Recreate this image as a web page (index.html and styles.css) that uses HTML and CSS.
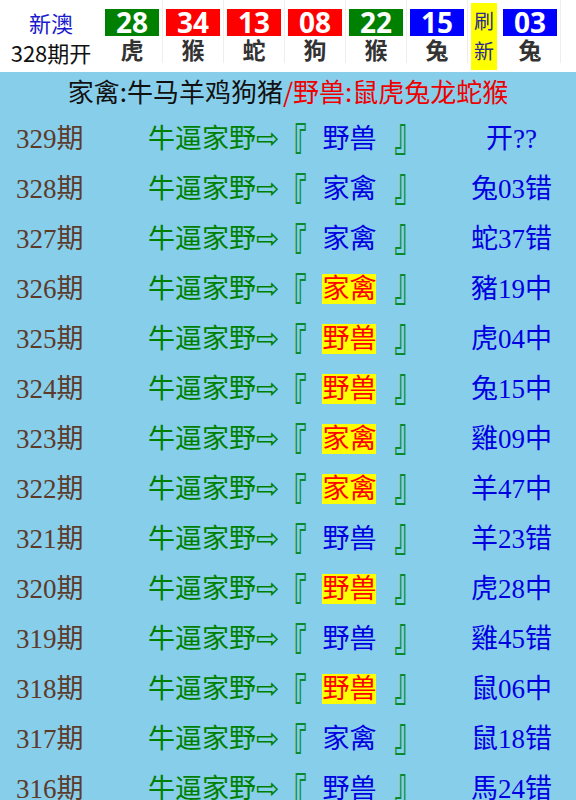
FILE: index.html
```html
<!DOCTYPE html>
<html lang="zh-CN">
<head>
    <meta charset="UTF-8">
    <meta name="viewport" content="width=device-width, initial-scale=1.0">
    <title>新澳 家禽野兽</title>
    <link rel="stylesheet" href="styles.css">
</head>
<body>

    <div class="kj">
        <div class="kj-info">
            <span class="kj-name">新澳</span>
            <span class="kj-qi">328期开</span>
        </div>
        <div class="kj-ball"><span class="num green">28</span><span class="sx">虎</span></div>
        <div class="kj-ball"><span class="num red">34</span><span class="sx">猴</span></div>
        <div class="kj-ball"><span class="num red">13</span><span class="sx">蛇</span></div>
        <div class="kj-ball"><span class="num red">08</span><span class="sx">狗</span></div>
        <div class="kj-ball"><span class="num green">22</span><span class="sx">猴</span></div>
        <div class="kj-ball"><span class="num blue">15</span><span class="sx">兔</span></div>
        <div class="kj-refresh"><span>刷新</span></div>
        <div class="kj-ball"><span class="num blue">03</span><span class="sx">兔</span></div>
    </div>

    <div class="box">
        <div class="title">家禽:牛马羊鸡狗猪<span class="title-red">/野兽:鼠虎兔龙蛇猴</span></div>
        <div id="list"></div>
    </div>

    <script>
        var rows = [
            ['329', '野兽', false, '开??'],
            ['328', '家禽', false, '兔03错'],
            ['327', '家禽', false, '蛇37错'],
            ['326', '家禽', true, '豬19中'],
            ['325', '野兽', true, '虎04中'],
            ['324', '野兽', true, '兔15中'],
            ['323', '家禽', true, '雞09中'],
            ['322', '家禽', true, '羊47中'],
            ['321', '野兽', false, '羊23错'],
            ['320', '野兽', true, '虎28中'],
            ['319', '野兽', false, '雞45错'],
            ['318', '野兽', true, '鼠06中'],
            ['317', '家禽', false, '鼠18错'],
            ['316', '野兽', false, '馬24错']
        ];

        var list = document.getElementById('list');
        rows.forEach(function (r) {
            var row = document.createElement('div');
            row.className = 'row';
            row.innerHTML =
                '<span class="qi">' + r[0] + '期</span>' +
                '<span class="tip">牛逼家野<span class="arrow">⇨</span><span class="br br-l">『</span>' +
                '<span class="pick' + (r[2] ? ' hit' : '') + '">' + r[1] + '</span><span class="br br-r">』</span></span>' +
                '<span class="res">' + r[3] + '</span>';
            list.appendChild(row);
        });
    </script>
</body>
</html>
```

FILE: styles.css
```css
body {
    margin: 0;
    padding: 0;
    background: #fff;
    font-family: "Noto Sans CJK SC", sans-serif;
}

/* 开奖栏 */
.kj {
    display: flex;
    height: 72px;
    background: #fff;
}

.kj-info {
    width: 102px;
    display: flex;
    flex-direction: column;
    align-items: center;
    padding-top: 7px;
    box-sizing: border-box;
}

.kj-name {
    color: #1a1acc;
    font-size: 22px;
    line-height: 30px;
}

.kj-qi {
    color: #111;
    font-size: 22px;
    line-height: 30px;
}

.kj-ball {
    width: 61px;
    padding: 9px 3px 0;
    box-sizing: border-box;
    display: flex;
    flex-direction: column;
    border-right: 1px solid #eee;
    height: 63px;
}

.num {
    display: block;
    height: 27px;
    line-height: 27px;
    text-align: center;
    color: #fff;
    font-family: "Open Sans", "Noto Sans", sans-serif;
    font-weight: bold;
    font-size: 28px;
}

.green { background: #008000; }
.red { background: #ff0000; }
.blue { background: #0000ff; }

.sx {
    display: block;
    text-align: center;
    color: #333;
    font-weight: bold;
    font-size: 23px;
    line-height: 27px;
}

.kj-refresh {
    width: 32px;
    display: flex;
    justify-content: center;
    padding-top: 3px;
}

.kj-refresh span {
    display: block;
    width: 26px;
    height: 67px;
    background: #ffff00;
    color: #2a2a8a;
    font-size: 20px;
    line-height: 30px;
    text-align: center;
    padding-top: 3px;
    box-sizing: border-box;
}

/* 列表 */
.box {
    background: #87ceeb;
}

.title {
    height: 39px;
    line-height: 38px;
    text-align: center;
    font-size: 26px;
    color: #111;
}

.title-red {
    color: #e00;
}

.row {
    display: grid;
    grid-template-columns: 148px 307px 1fr;
    height: 50px;
    align-items: center;
    font-family: "Liberation Serif", "Noto Sans CJK SC", serif;
    font-size: 27px;
}

.qi {
    padding-left: 16px;
    color: #5c3b2a;
}

.tip {
    color: #008000;
    white-space: nowrap;
}

.arrow {
    font-family: "DejaVu Sans", sans-serif;
    font-size: 28px;
}

.br {
    display: inline-block;
    font-family: "Noto Sans CJK SC", sans-serif;
    font-weight: bold;
    color: #0a8a2a;
}

.br-l {
    transform: translateY(6px) scaleY(1.7);
}

.br-r {
    transform: translateY(-6px) scaleY(1.7);
}

.pick {
    color: #0000e0;
    margin: 0 18px 0 16px;
}

.pick.hit {
    color: #ff0000;
    background: #ffff00;
}

.res {
    text-align: center;
    padding-right: 8px;
    color: #0000e0;
}
```
